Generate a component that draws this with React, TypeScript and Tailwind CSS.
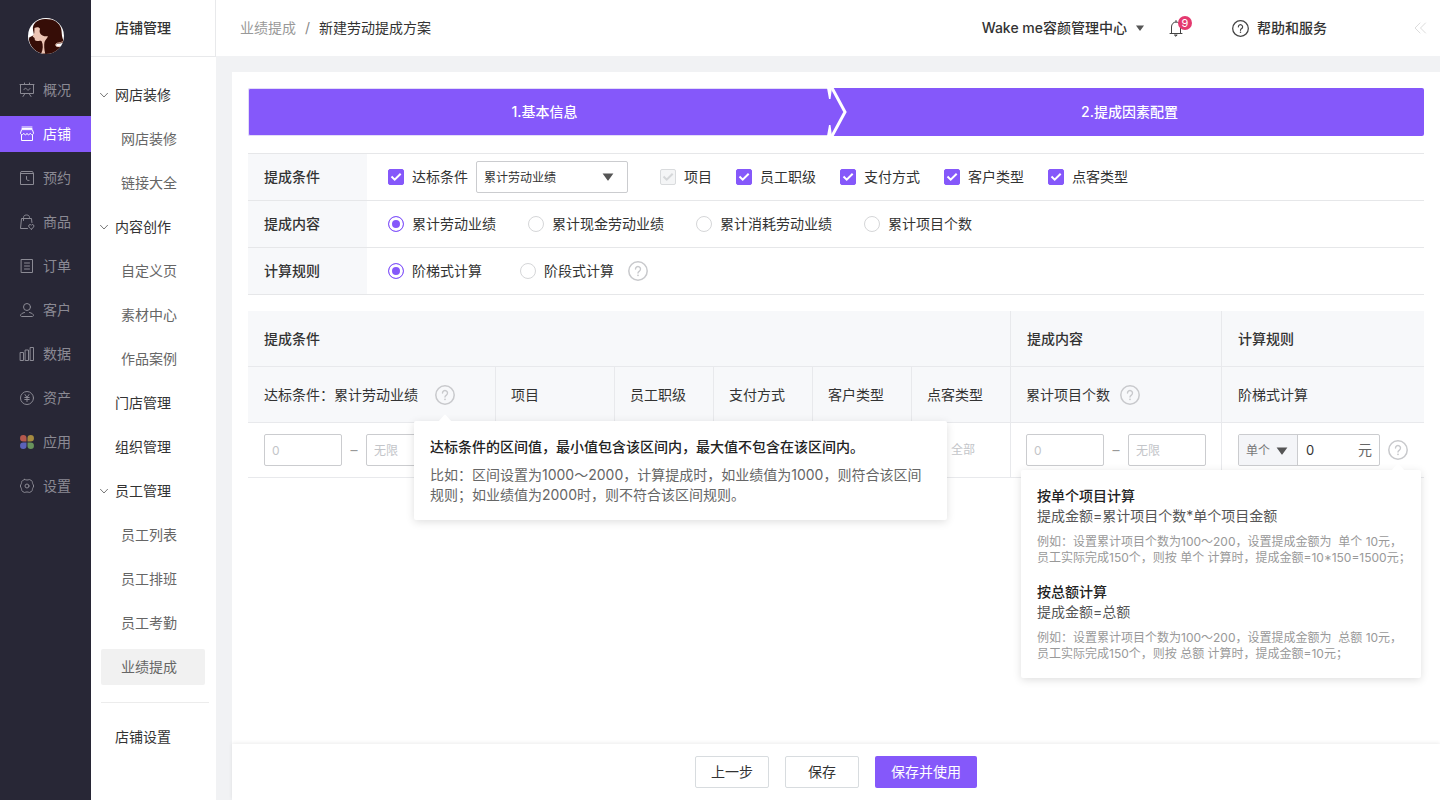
import type { ReactNode } from 'react';

const line = {
  fill: 'none',
  stroke: 'currentColor',
  strokeWidth: 1,
  strokeLinecap: 'round' as const,
  strokeLinejoin: 'round' as const,
};

function MenuIcon({ children }: { children: ReactNode }) {
  return (
    <svg viewBox="0 0 16 16" className="size-4 shrink-0" aria-hidden="true" {...line}>
      {children}
    </svg>
  );
}

const mainMenu: { label: string; icon: ReactNode; active?: boolean }[] = [
  {
    label: '概况',
    icon: (
      <>
        <path d="M1 2.500h14M1.500 2.500v9h13v-9M5.500 1v1.500M10.500 1v1.500M6 11.500l-2 3M10 11.500l2 3M5 7.500c.8-1.600 1.800-1.600 2.800-.3s2 1.300 3.200-.7" />
      </>
    ),
  },
  {
    label: '店铺',
    active: true,
    icon: (
      <>
        <path d="M3 1h10M3 2.500h10M2.500 4 1.500 7c0 2 2.500 2.300 3.300.3.800 2 2.600 2 3.200 0 .6 2 2.400 2 3.200 0 .8 2 3.300 1.700 3.300-.3l-1-3zM2.500 9v5.500h11V9" />
      </>
    ),
  },
  {
    label: '预约',
    icon: <path d="M2.500 1.500h11l1 2v11h-13v-11zM1.500 3.500h13M7.500 6.500V9c0 1 1 1.500 2.500 1.500" />,
  },
  {
    label: '商品',
    icon: (
      <>
        <path d="M8.500 14.500h-7l1-10h10l.4 4M4.500 6.500V3.500C4.500 2 5.500 1 7.500 1s3 1 3 2.500v1" />
        <path d="M12.300 15.200c-1.200-.9-2.600-1.800-2.600-3.200 0-1.700 2-2.100 2.600-.7.600-1.400 2.600-1 2.600.7 0 1.400-1.400 2.300-2.600 3.200z" />
      </>
    ),
  },
  {
    label: '订单',
    icon: <path d="M2.500 1.500h11v13h-11zM5.500 5h5M5.500 8h5M5.500 11h5" />,
  },
  {
    label: '客户',
    icon: (
      <>
        <circle cx="8" cy="5" r="3.500" />
        <path d="M5.500 10.500C3 11 1.500 12.300 1.500 13.500c0 .7.700 1 1.500 1h10c.8 0 1.500-.3 1.500-1 0-1.200-1.500-2.500-4-3" />
      </>
    ),
  },
  {
    label: '数据',
    icon: <path d="M1.500 6.500h3v8h-3zM6.500 4h3v10.500h-3zM11.500 1.500h3v13h-3z" />,
  },
  {
    label: '资产',
    icon: (
      <>
        <circle cx="8" cy="8" r="6.500" />
        <path d="m6 4.500 2 3 2-3M8 7.500v4M5.800 7.500h4.400M5.800 9.500h4.400" />
      </>
    ),
  },
  {
    label: '应用',
    icon: (
      <g stroke="none">
        <path fill="#b5594d" d="M4.300 1A3.200 3.200 0 0 0 4.300 7.500H7.500V4.200A3.200 3.200 0 0 0 4.300 1z" />
        <path fill="#a58b40" d="M11.700 1A3.200 3.200 0 0 1 11.700 7.500H8.500V4.200A3.200 3.200 0 0 1 11.700 1z" />
        <path fill="#5b62b8" d="M4.300 15A3.200 3.200 0 0 1 4.300 8.500H7.500V11.800A3.200 3.200 0 0 1 4.300 15z" />
        <path fill="#68935c" d="M11.700 15A3.200 3.200 0 0 0 11.700 8.500H8.500V11.800A3.200 3.200 0 0 0 11.700 15z" />
      </g>
    ),
  },
  {
    label: '设置',
    icon: (
      <>
        <path d="M5.700 1.500c1.500.7 3.100.7 4.600 0 1.300.4 2.300 1.100 3 2 .1 1.600.3 2.500 1.200 3.500v2c-.9 1-1.100 1.900-1.200 3.500-.7.900-1.700 1.600-3 2-1.500-.7-3.100-.7-4.600 0-1.300-.4-2.300-1.100-3-2-.1-1.600-.3-2.500-1.200-3.500V7c.9-1 1.100-1.900 1.200-3.500.7-.9 1.700-1.600 3-2z" />
        <circle cx="8" cy="8" r="2" />
      </>
    ),
  },
];

const shopMenu: { label: string; open?: boolean; children?: string[] }[] = [
  { label: '网店装修', open: true, children: ['网店装修', '链接大全'] },
  { label: '内容创作', open: true, children: ['自定义页', '素材中心', '作品案例'] },
  { label: '门店管理' },
  { label: '组织管理' },
  { label: '员工管理', open: true, children: ['员工列表', '员工排班', '员工考勤', '业绩提成'] },
];

function Avatar() {
  return (
    <svg viewBox="0 0 36 36" className="size-9" role="img" aria-label="头像">
      <defs>
        <clipPath id="avatar-clip">
          <circle cx="18" cy="18" r="18" />
        </clipPath>
      </defs>
      <g clipPath="url(#avatar-clip)">
        <rect width="36" height="36" fill="#fff" />
        <path
          fill="#360d07"
          d="M5 12C4 6 9 1 17 1c8-.3 14 3 16 9 1 4 .5 7 1.500 10 .5 2 1.500 3 1.500 4-2 2-6 .8-8 2.700-.5 2 2.500 2.800 5 1.800C31 33 27 35.500 22 36h-6c-5-.5-9-3-12-7-2.500-4-3.500-7-2.800-9.500L6 17z"
        />
        <path
          fill="#ecc4b4"
          d="M6.500 10c2.500-1.500 5-.8 5.500.8-.7 2.300-.5 4.400 1 5.700 1.800 1.500 4 2.200 6.800 1.500-.2 2.500-2.700 3.800-3.300 6-.6 3-.3 7.500.7 11.500h-4c1.800-4 2.300-8.500.3-12.500-2-.9-4.500.7-6.200-.4-.8-.8-.3-1.700-.8-2.700l-1.800-1.400L6.300 15z"
        />
        <path fill="none" stroke="#ecc4b4" strokeWidth=".8" d="M35 23.500c-3 2-6 .7-7.300 2.700-.7 2 1.800 3 4.300 2" />
      </g>
    </svg>
  );
}

function Triangle({ className }: { className: string }) {
  return (
    <svg viewBox="0 0 12 8" className={className} aria-hidden="true">
      <path d="M.6.500h10.800L6.500 7.300a.6.600 0 0 1-1 0z" fill="currentColor" />
    </svg>
  );
}

function QuestionMark({ className }: { className: string }) {
  return (
    <svg viewBox="0 0 20 20" className={className} aria-hidden="true">
      <circle cx="10" cy="10" r="9.200" fill="none" stroke="currentColor" strokeWidth="1.500" />
      <path
        d="M7.500 8.100a2.500 2.500 0 1 1 3.900 2c-.9.600-1.400 1-1.400 2"
        fill="none"
        stroke="currentColor"
        strokeWidth="1.400"
        strokeLinecap="round"
      />
      <circle cx="10" cy="14.300" r=".9" fill="currentColor" />
    </svg>
  );
}

function Help({ label, children }: { label: string; children?: ReactNode }) {
  return (
    <span className="relative inline-flex">
      <button type="button" aria-label={label} className="text-[#c8c9cc]">
        <QuestionMark className="size-5" />
      </button>
      {children}
    </span>
  );
}

function Check({ label, disabled }: { label: string; disabled?: boolean }) {
  return (
    <label className="flex items-center gap-2">
      <span className="relative flex">
        <input
          type="checkbox"
          defaultChecked
          disabled={disabled}
          className="size-4 appearance-none rounded-xs border border-[#8558fa] bg-[#8558fa] disabled:border-[#d9dbdd] disabled:bg-[#f4f5f6]"
        />
        <svg
          viewBox="0 0 16 16"
          className={disabled ? 'pointer-events-none absolute inset-0 text-[#d5d7d9]' : 'pointer-events-none absolute inset-0 text-white'}
          aria-hidden="true"
        >
          <path d="m3.500 7.500 3.200 3.200 6-6" fill="none" stroke="currentColor" strokeWidth="2" />
        </svg>
      </span>
      {label}
    </label>
  );
}

function Radio({ name, label, checked }: { name: string; label: string; checked?: boolean }) {
  return (
    <label className="flex items-center gap-2">
      <input
        type="radio"
        name={name}
        defaultChecked={checked}
        className="size-4 appearance-none rounded-full border border-[#d5d6d8] bg-white checked:border-[#8558fa] checked:bg-[#8558fa] checked:shadow-[inset_0_0_0_3px_#fff]"
      />
      {label}
    </label>
  );
}

function FormRow({ title, children }: { title: string; children: ReactNode }) {
  return (
    <div className="flex border-b border-[#e6e7e9]" role="group" aria-label={title}>
      <div className="flex w-[119px] shrink-0 items-center bg-[#f7f8fa] pl-4 font-medium">{title}</div>
      <div className="flex min-h-[46px] flex-1 items-center pl-[21px]">{children}</div>
    </div>
  );
}

function RangeInputs({ label }: { label: string }) {
  const box =
    'h-8 w-[78px] rounded-xs border border-[#cbcccf] bg-white px-[7px] text-xs outline-none placeholder:text-[#c3c5c9]';
  return (
    <div className="flex items-center">
      <input aria-label={`${label}最小值`} placeholder="0" className={box} />
      <span className="w-6 text-center text-[#999]">–</span>
      <input aria-label={`${label}最大值`} placeholder="无限" className={box} />
    </div>
  );
}

function TipArrow({ className }: { className: string }) {
  return (
    <svg viewBox="0 0 14 8" className={className} aria-hidden="true">
      <path d="M0 8 6.200.9a1.100 1.100 0 0 1 1.600 0L14 8z" fill="#fff" />
    </svg>
  );
}

function CalcExample({ title, formula, children }: { title: string; formula: string; children: ReactNode }) {
  return (
    <div>
      <h3 className="font-medium text-[#222]">{title}</h3>
      <p className="text-[#555]">{formula}</p>
      <p className="mt-2 text-xs leading-4 text-[#999]">{children}</p>
    </div>
  );
}

export default function App() {
  const groupCell = 'h-14 border-b border-[#e8e9ec] px-4 text-left font-medium text-[#333]';
  const headCell = 'h-14 border-b border-[#e8e9ec] px-4 text-left font-normal text-[#333]';
  const factorCell = 'h-14 border-r border-b border-[#e8e9ec] px-[15px] text-left font-normal text-[#333]';
  return (
    <div className="flex min-h-screen bg-[#f1f2f4] font-[Inter,'Noto_Sans_CJK_SC',sans-serif] text-sm leading-5 text-[#333]">
      <nav aria-label="主导航" className="w-[91px] shrink-0 bg-[#282736] pt-[18px]">
        <a href="#profile" className="mx-auto mb-[18px] flex size-9">
          <Avatar />
        </a>
        <ul className="flex flex-col gap-2">
          {mainMenu.map((item) => (
            <li key={item.label}>
              <a
                href={`#${item.label}`}
                className={
                  item.active
                    ? 'flex h-9 items-center gap-2 bg-[#8558fa] pl-[19px] text-white'
                    : 'flex h-9 items-center gap-2 pl-[19px] text-[#8b8a94]'
                }
              >
                <MenuIcon>{item.icon}</MenuIcon>
                {item.label}
              </a>
            </li>
          ))}
        </ul>
      </nav>

      <aside className="w-[125px] shrink-0 bg-white">
        <h1 className="flex h-[57px] items-center border-r border-b border-[#e8e9eb] pl-6 font-medium">店铺管理</h1>
        <nav aria-label="店铺管理" className="pt-5 pr-[11px] pl-2">
          <ul className="flex flex-col gap-2">
            {shopMenu.map((group) => (
              <li key={group.label}>
                <a href={`#${group.label}`} className="flex h-9 items-center gap-1.5">
                  <svg viewBox="0 0 10 10" className="size-2.5" aria-hidden="true">
                    {group.open && <path d="m1.200 3 3.800 4 3.800-4" fill="none" stroke="#777" strokeWidth="1" />}
                  </svg>
                  {group.label}
                </a>
                {group.children && (
                  <ul className="mt-2 ml-0.5 flex flex-col gap-2">
                    {group.children.map((child) => (
                      <li key={child}>
                        <a
                          href={`#${child}`}
                          className={
                            child === '业绩提成'
                              ? 'flex h-9 items-center rounded-xs bg-[#f1f1f1] pl-5 text-[#666]'
                              : 'flex h-9 items-center pl-5 text-[#666]'
                          }
                        >
                          {child}
                        </a>
                      </li>
                    ))}
                  </ul>
                )}
              </li>
            ))}
          </ul>
          <hr className="mt-[17px] -mr-1 mb-4 ml-0.5 border-[#ececec]" />
          <a href="#shop-settings" className="flex h-9 items-center pl-4">
            店铺设置
          </a>
        </nav>
      </aside>

      <div className="flex min-w-0 flex-1 flex-col">
        <header className="flex h-14 items-center bg-white pr-[13px] pl-6">
          <nav aria-label="面包屑" className="flex gap-[9px]">
            <a href="#commission" className="text-[#999]">
              业绩提成
            </a>
            <span className="text-[#888]">/</span>
            <span>新建劳动提成方案</span>
          </nav>
          <button type="button" className="ml-auto flex items-center gap-2 font-medium">
            Wake me容颜管理中心
            <Triangle className="h-1.5 w-2.5 text-[#555]" />
          </button>
          <button type="button" aria-label="通知" className="relative ml-[23px] text-[#444]">
            <svg viewBox="0 0 16 18" className="h-[18px] w-4" aria-hidden="true" {...line}>
              <path d="M2 14.500h12M3.500 14.500V8c0-3 2-5 4.500-5s4.500 2 4.500 5v6.500M8 1.500V3" />
              <path d="M6.800 16h2.400L8 17z" fill="currentColor" />
            </svg>
            <span className="absolute -top-[3px] -right-2 flex size-3.5 items-center justify-center rounded-full bg-[#e4396f] text-[11px] leading-none text-white">
              9
            </span>
          </button>
          <button type="button" className="ml-12 flex items-center gap-2 font-medium">
            <QuestionMark className="size-[17px] text-[#444]" />
            帮助和服务
          </button>
          <button type="button" aria-label="收起" className="ml-[86px] text-[#dcdcdc]">
            <svg viewBox="0 0 14 14" className="size-3.5" aria-hidden="true" {...line}>
              <path d="M7 2 2 7l5 5M12.500 2l-5 5 5 5" />
            </svg>
          </button>
        </header>

        <main className="mt-4 ml-4 flex flex-1 flex-col bg-white">
          <div className="px-4 pt-4">
            <ol className="flex font-medium text-white">
              <li className="flex h-12 flex-[567] items-center justify-center rounded-l-xs border-y border-l border-[#e3dcf8] bg-[#8558fa] pl-3">
                1.基本信息
              </li>
              <li className="flex h-12 flex-[596] items-center justify-center rounded-r-xs bg-[#8558fa]">
                <svg viewBox="0 0 20 48" className="-ml-px h-12 w-5 shrink-0" aria-hidden="true">
                  <path d="M4.500-1 18 24 4.500 49" fill="none" stroke="#fff" strokeWidth="3" />
                  <path d="M0 0h5L3.500 11H2zM0 48h5L3.500 37H2z" fill="#fff" />
                </svg>
                <span className="flex-1 pr-3 text-center">2.提成因素配置</span>
              </li>
            </ol>

            <section className="mt-[17px] border-t border-[#e6e7e9]">
              <FormRow title="提成条件">
                <Check label="达标条件" />
                <div className="relative ml-2">
                  <select
                    aria-label="达标条件类型"
                    className="h-8 w-[152px] appearance-none rounded-xs border border-[#cbcccf] bg-white px-[7px] pt-0.5 text-xs"
                  >
                    <option>累计劳动业绩</option>
                  </select>
                  <Triangle className="pointer-events-none absolute top-3 right-3.5 h-2 w-3 text-[#555]" />
                </div>
                <div className="ml-8 flex gap-6">
                  <Check label="项目" disabled />
                  <Check label="员工职级" />
                  <Check label="支付方式" />
                  <Check label="客户类型" />
                  <Check label="点客类型" />
                </div>
              </FormRow>
              <FormRow title="提成内容">
                <div className="flex gap-8">
                  <Radio name="content" label="累计劳动业绩" checked />
                  <Radio name="content" label="累计现金劳动业绩" />
                  <Radio name="content" label="累计消耗劳动业绩" />
                  <Radio name="content" label="累计项目个数" />
                </div>
              </FormRow>
              <FormRow title="计算规则">
                <div className="mr-3.5 flex gap-[38px]">
                  <Radio name="rule" label="阶梯式计算" checked />
                  <Radio name="rule" label="阶段式计算" />
                </div>
                <Help label="计算规则说明" />
              </FormRow>
            </section>

            <table className="mt-4 w-full table-fixed border-separate border-spacing-0">
              <colgroup>
                <col className="w-[248px]" />
                <col className="w-[119px]" />
                <col className="w-[99px]" />
                <col className="w-[99px]" />
                <col className="w-[99px]" />
                <col className="w-[99px]" />
                <col className="w-[211px]" />
                <col className="w-[202px]" />
              </colgroup>
              <thead className="bg-[#f7f8fa]">
                <tr>
                  <th colSpan={6} className={`${groupCell} border-r`}>
                    提成条件
                  </th>
                  <th className={`${groupCell} border-r`}>提成内容</th>
                  <th className={groupCell}>计算规则</th>
                </tr>
                <tr>
                  <th className={`${headCell} border-r`}>
                    <div className="flex items-center gap-[17px] whitespace-nowrap">
                      达标条件：累计劳动业绩
                      <Help label="达标条件说明">
                        <div
                          role="tooltip"
                          className="absolute top-9 -left-[21px] z-10 w-[533px] rounded-xs bg-white px-4 pt-4 pb-[15px] shadow-[0_2px_8px_rgba(0,0,0,0.13)]"
                        >
                          <TipArrow className="absolute -top-[7px] left-6 h-2 w-3.5" />
                          <h3 className="font-medium text-[#222]">
                            达标条件的区间值，最小值包含该区间内，最大值不包含在该区间内。
                          </h3>
                          <p className="mt-2 text-[#666]">
                            比如：区间设置为1000～2000，计算提成时，如业绩值为1000，则符合该区间
                            <br />
                            规则；如业绩值为2000时，则不符合该区间规则。
                          </p>
                        </div>
                      </Help>
                    </div>
                  </th>
                  <th className={factorCell}>项目</th>
                  <th className={factorCell}>员工职级</th>
                  <th className={factorCell}>支付方式</th>
                  <th className={factorCell}>客户类型</th>
                  <th className={factorCell}>点客类型</th>
                  <th className={factorCell}>
                    <div className="flex items-center gap-2.5">
                      累计项目个数
                      <Help label="累计项目个数说明" />
                    </div>
                  </th>
                  <th className={headCell}>阶梯式计算</th>
                </tr>
              </thead>
              <tbody>
                <tr>
                  <td className="h-[55px] border-b border-[#e8e9ec] pl-4">
                    <RangeInputs label="累计劳动业绩" />
                  </td>
                  <td className="border-b border-[#e8e9ec]" />
                  <td className="border-b border-[#e8e9ec]" />
                  <td className="border-b border-[#e8e9ec]" />
                  <td className="border-b border-[#e8e9ec]" />
                  <td className="border-r border-b border-[#e8e9ec] pl-[39px] text-xs text-[#c3c5c9]">全部</td>
                  <td className="border-r border-b border-[#e8e9ec] px-[15px]">
                    <RangeInputs label="累计项目个数" />
                  </td>
                  <td className="border-b border-[#e8e9ec] pl-4">
                    <div className="flex items-center gap-2">
                      <div className="flex h-8 w-[142px] overflow-hidden rounded-xs border border-[#cbcccf]">
                        <div className="relative flex">
                          <select
                            aria-label="计算方式"
                            className="w-[59px] appearance-none border-r border-[#cbcccf] bg-[#f4f5f8] pt-0.5 pl-[7px] text-xs text-[#777]"
                          >
                            <option>单个</option>
                          </select>
                          <Triangle className="pointer-events-none absolute top-3 right-2.5 h-2 w-3 text-[#555]" />
                        </div>
                        <input
                          aria-label="提成金额"
                          defaultValue="0"
                          className="w-0 min-w-0 flex-1 bg-white pl-2 text-[13px] outline-none"
                        />
                        <span className="flex items-center pr-[7px] text-[#666]">元</span>
                      </div>
                      <Help label="阶梯式计算说明">
                        <div
                          role="tooltip"
                          className="absolute top-[30px] -right-[13px] z-10 flex w-[400px] flex-col gap-4 rounded-xs bg-white p-4 whitespace-nowrap shadow-[0_2px_8px_rgba(0,0,0,0.13)]"
                        >
                          <TipArrow className="absolute -top-[7px] right-4 h-2 w-3.5" />
                          <CalcExample title="按单个项目计算" formula="提成金额=累计项目个数*单个项目金额">
                            例如：设置累计项目个数为100～200，设置提成金额为&nbsp; 单个 10元，
                            <br />
                            员工实际完成150个，则按 单个 计算时，提成金额=10*150=1500元；
                          </CalcExample>
                          <CalcExample title="按总额计算" formula="提成金额=总额">
                            例如：设置累计项目个数为100～200，设置提成金额为&nbsp; 总额 10元，
                            <br />
                            员工实际完成150个，则按 总额 计算时，提成金额=10元；
                          </CalcExample>
                        </div>
                      </Help>
                    </div>
                  </td>
                </tr>
              </tbody>
            </table>
          </div>

          <footer className="mt-auto flex justify-center gap-4 bg-white py-3 shadow-[0_-1px_4px_rgba(0,0,0,0.08)]">
            <button type="button" className="h-8 w-[74px] rounded-xs border border-[#d8dcdf] bg-white">
              上一步
            </button>
            <button type="button" className="h-8 w-[74px] rounded-xs border border-[#d8dcdf] bg-white">
              保存
            </button>
            <button type="button" className="h-8 rounded-xs bg-[#8558fa] px-4 text-white">
              保存并使用
            </button>
          </footer>
        </main>
      </div>
    </div>
  );
}
